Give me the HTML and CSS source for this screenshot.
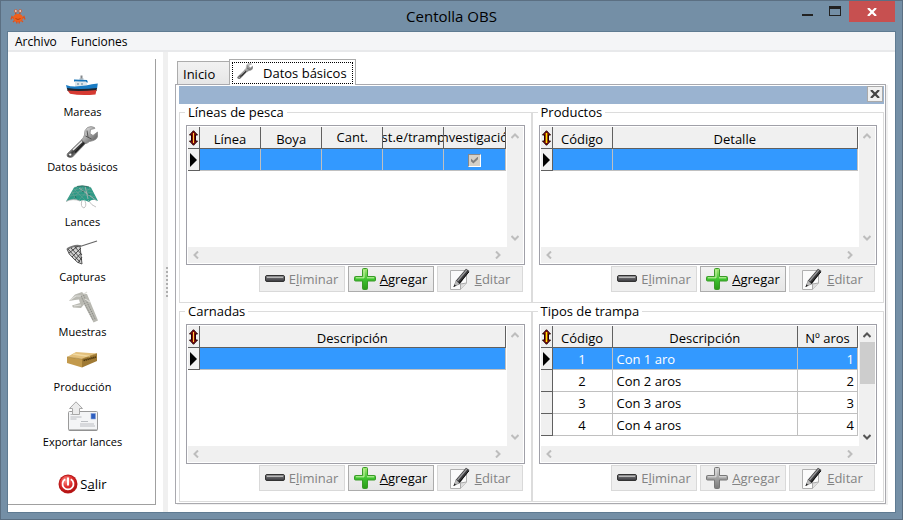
FILE: index.html
```html
<!DOCTYPE html>
<html lang="es">
<head>
<meta charset="utf-8">
<title>Centolla OBS</title>
<link rel="stylesheet" href="styles.css">
</head>
<body>
<svg class="defs" aria-hidden="true">
  <defs>
    <linearGradient id="steel" x1="0" y1="0" x2="1" y2="1"><stop offset="0" stop-color="#f4f4f4"/><stop offset=".5" stop-color="#a2a2a2"/><stop offset="1" stop-color="#4a4a4a"/></linearGradient>
    <linearGradient id="handle" x1="0" y1="0" x2="1" y2="1"><stop offset="0.3" stop-color="#d8d8d8"/><stop offset=".5" stop-color="#3c3c3c"/><stop offset=".75" stop-color="#a0a0a0"/></linearGradient>
    <linearGradient id="green" x1="0" y1="0" x2="0" y2="1"><stop offset="0" stop-color="#a8e878"/><stop offset=".5" stop-color="#3fc431"/><stop offset="1" stop-color="#2c9a18"/></linearGradient>
    <linearGradient id="grey" x1="0" y1="0" x2="0" y2="1"><stop offset="0" stop-color="#d8d8d8"/><stop offset=".5" stop-color="#a2a2a2"/><stop offset="1" stop-color="#7a7a7a"/></linearGradient>
    <linearGradient id="dark" x1="0" y1="0" x2="0" y2="1"><stop offset="0" stop-color="#a8a8a8"/><stop offset=".4" stop-color="#66666a"/><stop offset="1" stop-color="#38383c"/></linearGradient>
    <radialGradient id="red" cx=".4" cy=".3" r=".7"><stop offset="0" stop-color="#ff9a90"/><stop offset=".5" stop-color="#e03030"/><stop offset="1" stop-color="#b01010"/></radialGradient>
  </defs>
  <symbol id="wrench" viewBox="0 0 32 32">
    <path d="M1.500 27.500 L16 13.500 L20 17 L6.500 31 Q3.500 32 1.500 30.500 Q.5 29 1.500 27.500z" fill="url(#handle)" stroke="#666" stroke-width=".7"/>
    <path d="M7 24 L16 15.500" stroke="#eee" stroke-width="1.300"/>
    <path d="M9 26.500 L18 17" stroke="#222" stroke-width="1.500"/>
    <circle cx="4.200" cy="28.600" r="1.500" fill="#fff" stroke="#555" stroke-width=".8"/>
    <path d="M15.500 14 Q17.500 12 18.500 9 Q18 4 21.500 1.500 Q25 -.3 28.500 1.500 L28.800 2.500 L24.500 3.500 L24 7.500 L27 9.500 L31.500 6 L31.800 9.500 Q31.500 13 27.500 14.500 Q23 15 20.500 17.500z" fill="url(#steel)" stroke="#8a8a8a" stroke-width=".8"/>
    <path d="M19.500 10 L25.500 13 M21 4.500 L22 11" stroke="#555" stroke-width="1"/>
  </symbol>
  <symbol id="ship" viewBox="0 0 32 32">
    <path d="M13.500 7 h4 v3 h-4z" fill="#c2ccd2"/><path d="M14.500 4.500h2v3h-2z" fill="#85898c"/>
    <path d="M8 8.500 L21 9 L22 11.500 L8 10.500z" fill="#1874b8"/>
    <path d="M9 10.500 H20 L22 16 H9z" fill="#dfe6ea"/><path d="M11 12h2v2h-2z M15 12h2v2h-2z" fill="#9db4c2"/>
    <path d="M0 14 Q4 15.500 9 15.500 L20 14.500 Q26 13 31.800 12.500 L31 18 H1z" fill="#1a7cc4"/>
    <path d="M1 17 Q14 19 31 17 L30.500 20 H1.500z" fill="#20242c"/>
    <path d="M1.500 19.500 Q15 20.500 30.500 19 L29.500 23.500 Q15 25 4 22.800z" fill="#d63a32"/>
  </symbol>
  <symbol id="trap" viewBox="0 0 32 32">
    <path d="M8 6.500 Q16 3 25 6.500 L32 20 Q26 17 23 21 Q18 18 14 20 Q7 17 0 20.500z" fill="#2d9a86"/>
    <path d="M8 6.500 Q16 3 25 6.500 M7 9 Q16 6 26 9 M5 12 Q16 9 28 12 M4 15 Q16 12 30 16 M1 19 L12 6 M6 19 L18 5 M13 19 L24 7 M27 17 L14 6 M19 19 L8 8 M10 19 L6 10" fill="none" stroke="#84a49a" stroke-width=".4"/>
    <path d="M0 20.500 Q7 17 14 20 M19 5 L22 18 M13 7 L31 20 M16 19 Q14 26 18 27 Q21 25 19 20 M22 19 Q26 25 30 26" fill="none" stroke="#b4b4b4" stroke-width=".8"/>
    <path d="M11 5.500 Q16 4 23 6 M9 15 L10 17 M16 10l2 1 M22 13 l2 1" stroke="#1a5a50" stroke-width=".7" fill="none"/>
  </symbol>
  <symbol id="net" viewBox="0 0 32 32">
    <path d="M14 10.500 L31 5" stroke="#666" stroke-width="1.200"/>
    <path d="M1 13 Q7 9.500 14 10.500 L16 28 Q11 27 8 23 Q2 18 1 13z" fill="#999" fill-opacity=".45" stroke="#555"/>
    <path d="M2 13 L14 26 M5 12 L16 24 M9 11 L16 19 M3 17 L12 10 M6 21 L15 12 M9 24 L15 17 M12 27 L16 21" stroke="#3c3c3c" stroke-width=".9"/>
    <path d="M1 13 Q9 8 15 10" stroke="#777" fill="none" stroke-width="1.500"/>
  </symbol>
  <symbol id="caliper" viewBox="0 0 32 32">
    <path d="M2 10 L8 3.500 L15 1 L17 3 L20 3 L31 29.500 L26.500 31.500 L17 13.500 L14 17 L6 16.500 L5 14.500 L13 12 L12 8.500 L8 9z" fill="#b9b9b2"/>
    <path d="M14 5 L26 29 M16.500 4 L28.500 29" stroke="#8a8a86" stroke-width="1" stroke-dasharray="1.500 1"/>
    <path d="M3 9 L9 5 L14 5 M7 15 L14 14 M17 3 L20 1 M18 8 L23 11" stroke="#dededa" stroke-width="1.200" fill="none"/>
  </symbol>
  <symbol id="box" viewBox="0 0 32 32">
    <path d="M1 11 L10 6 L31 7.500 L18 13z" fill="#e3c07c"/>
    <path d="M1 11 L16 13 L16 21.500 L1 17z" fill="#c39a4c"/><path d="M16 13 L31 7.500 L31 15 L16 21.500z" fill="#a07a34"/>
    <path d="M7 8 L24 10.500" stroke="#f0d8a0" stroke-width="1.500"/>
    <path d="M17.500 14.500 L30 11" stroke="#4e3810" stroke-width="1.800" stroke-dasharray="1.500 .5"/>
    <path d="M1 11 L16 13 L31 7.500" stroke="#a07c34" fill="none" stroke-width=".6"/>
  </symbol>
  <symbol id="letter" viewBox="0 0 32 32">
    <rect x="1.500" y="10.500" width="29" height="19" rx="1" fill="#f4f5f6" stroke="#9a9a9a"/>
    <path d="M2 29 H30" stroke="#888"/>
    <path d="M3.500 13.500h8 M3.500 16h11 M3.500 18h6 M14 20.500h7 M13 23h14 M13 25h15" stroke="#b4b8bc" stroke-width=".9"/>
    <rect x="24" y="12.500" width="4.500" height="5.500" fill="#2e5fc0" stroke="#8aa4d8" stroke-width=".6"/>
    <path d="M9 .8 L15.500 7.500 H12.500 V13.500 H5.500 V7.500 H2.500z" fill="#ececec" stroke="#a8a8a8"/>
  </symbol>
  <symbol id="power" viewBox="0 0 20 20">
    <circle cx="10" cy="10" r="9.500" fill="#b81818"/><circle cx="10" cy="10" r="8.500" fill="url(#red)"/>
    <path d="M7.200 5.200 A5.500 5.500 0 1 0 12.800 5.200" fill="none" stroke="#fff" stroke-width="1.800"/><path d="M10 3.500 V11.500" stroke="#fff" stroke-width="2"/>
  </symbol>
  <symbol id="crab" viewBox="0 0 16 16">
    <path d="M6 6 L5.500 2 M9.500 6 L10.500 2" stroke="#b04020"/><circle cx="5.800" cy="2" r="1.500" fill="#dfc8c0" stroke="#c85028" stroke-width=".7"/><circle cx="10.200" cy="2" r="1.500" fill="#dfc8c0" stroke="#c85028" stroke-width=".7"/>
    <ellipse cx="8" cy="9" rx="5" ry="4.200" fill="#f0601c"/>
    <path d="M3.500 9.500 L2 7.500 L1 10.500 M12.500 9.500 L14 7.500 L15 10.500 M4.500 11.500 L3 13 M11.500 11.500 L13 13 M6.500 12.500 L7 14.500 M9.500 12.500 L9 14.500" stroke="#e0501c" stroke-width="1.200" fill="none"/>
    <path d="M5.500 9.500 Q8 11.500 10.500 9.500" stroke="#a83808" stroke-width=".8" fill="none"/>
  </symbol>
  <symbol id="minus" viewBox="0 0 20 8">
    <rect x=".5" y=".5" width="19" height="6" rx="1.500" fill="url(#dark)" stroke="#333"/><path d="M2 2.500h16" stroke="#b8b8b8"/>
  </symbol>
  <symbol id="plus" viewBox="0 0 22 22">
    <path d="M9.500 .5h3q1 0 1 1V8.500h7q1 0 1 1v2.500q0 1-1 1H13.500V20.500q0 1-1 1H9.500q-1 0-1-1V13H1.500q-1 0-1-1V9.500q0-1 1-1H8.500V1.500q0-1 1-1z" fill="url(#green)" stroke="#3a9a28"/>
    <path d="M10 2v7.800H2 M13 9.800h7" stroke="#c8f4a8" fill="none"/>
  </symbol>
  <symbol id="plus-off" viewBox="0 0 22 22">
    <path d="M9.500 .5h3q1 0 1 1V8.500h7q1 0 1 1v2.500q0 1-1 1H13.500V20.500q0 1-1 1H9.500q-1 0-1-1V13H1.500q-1 0-1-1V9.500q0-1 1-1H8.500V1.500q0-1 1-1z" fill="url(#grey)" stroke="#777"/>
    <path d="M10 2v7.800H2 M13 9.800h7" stroke="#dedede" fill="none"/>
  </symbol>
  <symbol id="pencil" viewBox="0 0 22 22">
    <path d="M1.500 2.500h16v12.500l-6 6.500h-10z" fill="#fbfbfb" stroke="#b0b0b0"/><path d="M11.500 21.500v-5.500l6-1" fill="#ddd" stroke="#aaa"/>
    <path d="M4.500 19 L7 12.500 L17 .8 L20.500 3 L11 16z" fill="#3a3a3c"/><path d="M8.500 13 L17.800 2" stroke="#9a9a9c" stroke-width="1.300"/><path d="M10 15.500 L19.800 4" stroke="#0c0c0c" stroke-width="1"/>
    <path d="M4.500 19 L7 12.500 L10.500 16z" fill="#b8b8b8"/><path d="M4.500 19 L5.500 16.500 L7 17.800z" fill="#111"/>
  </symbol>
  <symbol id="updown" viewBox="0 0 9 16">
    <path d="M4.500 .7 L8.500 5 H6.500 V11 H8.500 L4.500 15.300 L.5 11 H2.500 V5 H.5z" fill="#800808" stroke="#200000"/><path d="M4.500 3v10" stroke="#ffd040" stroke-width="1"/>
  </symbol>
  <symbol id="updown-gold" viewBox="0 0 9 16">
    <path d="M4.500 .7 L8.500 5 H6.500 V11 H8.500 L4.500 15.300 L.5 11 H2.500 V5 H.5z" fill="#800808" stroke="#200000"/><path d="M4.500 3v10" stroke="#ffe800" stroke-width="1.500"/>
  </symbol>
  <symbol id="here" viewBox="0 0 7 14"><path d="M0 0 L7 7 L0 14z" fill="#000"/></symbol>
  <symbol id="chev" viewBox="0 0 8 6"><path d="M.5 5 L4 1.500 L7.500 5" fill="none" stroke="currentColor" stroke-width="2"/></symbol>
  <symbol id="cross" viewBox="0 0 10 8"><path d="M1 0 L9 8 M9 0 L1 8" stroke="currentColor" stroke-width="2.200"/></symbol>
</svg>

<div class="window">
  <header class="titlebar">
    <svg class="app-icon"><use href="#crab"/></svg>
    <h1>Centolla OBS</h1>
    <div class="controls">
      <button class="min" aria-label="Minimizar"><i></i></button>
      <button class="max" aria-label="Maximizar"><i></i></button>
      <button class="close" aria-label="Cerrar"><svg><use href="#cross"/></svg></button>
    </div>
  </header>
  <div class="client">
    <nav class="menubar"><button>Archivo</button><button>Funciones</button></nav>
    <div class="body">
      <aside class="sidebar">
        <button class="nav"><svg><use href="#ship"/></svg>Mareas</button>
        <button class="nav"><svg><use href="#wrench"/></svg>Datos básicos</button>
        <button class="nav"><svg><use href="#trap"/></svg>Lances</button>
        <button class="nav"><svg><use href="#net"/></svg>Capturas</button>
        <button class="nav"><svg><use href="#caliper"/></svg>Muestras</button>
        <button class="nav"><svg><use href="#box"/></svg>Producción</button>
        <button class="nav"><svg><use href="#letter"/></svg>Exportar lances</button>
        <button class="exit"><svg><use href="#power"/></svg><span>S<u>a</u>lir</span></button>
      </aside>
      <div class="splitter"><i></i></div>
      <main class="main">
        <div class="tabs">
          <button class="tab">Inicio</button>
          <button class="tab active"><span class="focus"><svg><use href="#wrench"/></svg>Datos básicos</span></button>
        </div>
        <section class="page">
          <div class="bar"><button aria-label="Cerrar pestaña"><svg><use href="#cross"/></svg></button></div>
          <div class="panels">
            <fieldset>
              <legend>Líneas de pesca</legend>
              <div class="grid">
                <table>
                  <colgroup><col class="mark"><col><col><col><col><col></colgroup>
                  <thead><tr><th><svg><use href="#updown"/></svg></th><th>Línea</th><th>Boya</th><th class="raised">Cant.</th><th class="raised"><span class="clip">st.e/tramp</span></th><th class="raised"><span class="clip">nvestigació</span></th></tr></thead>
                  <tbody><tr class="sel"><th><svg><use href="#here"/></svg></th><td></td><td></td><td></td><td></td><td class="center"><input type="checkbox" checked disabled aria-label="Investigación"></td></tr></tbody>
                </table>
                <div class="vscroll"><svg><use href="#chev"/></svg><svg class="down"><use href="#chev"/></svg></div>
                <div class="hscroll"><svg class="left"><use href="#chev"/></svg><svg class="right"><use href="#chev"/></svg></div>
              </div>
              <div class="actions">
                <button disabled><svg class="flat"><use href="#minus"/></svg><span>E<u>l</u>iminar</span></button>
                <button><svg><use href="#plus"/></svg><span><u>A</u>gregar</span></button>
                <button disabled><svg><use href="#pencil"/></svg><span><u>E</u>ditar</span></button>
              </div>
            </fieldset>
            <fieldset>
              <legend>Productos</legend>
              <div class="grid">
                <table>
                  <colgroup><col class="mark"><col class="code"><col></colgroup>
                  <thead><tr><th><svg><use href="#updown-gold"/></svg></th><th>Código</th><th>Detalle</th></tr></thead>
                  <tbody><tr class="sel"><th><svg><use href="#here"/></svg></th><td></td><td></td></tr></tbody>
                </table>
                <div class="vscroll"><svg><use href="#chev"/></svg><svg class="down"><use href="#chev"/></svg></div>
                <div class="hscroll"><svg class="left"><use href="#chev"/></svg><svg class="right"><use href="#chev"/></svg></div>
              </div>
              <div class="actions">
                <button disabled><svg class="flat"><use href="#minus"/></svg><span>E<u>l</u>iminar</span></button>
                <button><svg><use href="#plus"/></svg><span><u>A</u>gregar</span></button>
                <button disabled><svg><use href="#pencil"/></svg><span><u>E</u>ditar</span></button>
              </div>
            </fieldset>
            <fieldset>
              <legend>Carnadas</legend>
              <div class="grid">
                <table>
                  <colgroup><col class="mark"><col></colgroup>
                  <thead><tr><th><svg><use href="#updown"/></svg></th><th>Descripción</th></tr></thead>
                  <tbody><tr class="sel"><th><svg><use href="#here"/></svg></th><td></td></tr></tbody>
                </table>
                <div class="vscroll"><svg><use href="#chev"/></svg><svg class="down"><use href="#chev"/></svg></div>
                <div class="hscroll"><svg class="left"><use href="#chev"/></svg><svg class="right"><use href="#chev"/></svg></div>
              </div>
              <div class="actions">
                <button disabled><svg class="flat"><use href="#minus"/></svg><span>E<u>l</u>iminar</span></button>
                <button><svg><use href="#plus"/></svg><span><u>A</u>gregar</span></button>
                <button disabled><svg><use href="#pencil"/></svg><span><u>E</u>ditar</span></button>
              </div>
            </fieldset>
            <fieldset>
              <legend>Tipos de trampa</legend>
              <div class="grid">
                <table>
                  <colgroup><col class="mark"><col class="code"><col><col class="code"></colgroup>
                  <thead><tr><th><svg><use href="#updown-gold"/></svg></th><th>Código</th><th>Descripción</th><th>Nº aros</th></tr></thead>
                  <tbody>
                    <tr class="sel"><th><svg><use href="#here"/></svg></th><td class="center">1</td><td>Con 1 aro</td><td class="num">1</td></tr>
                    <tr><th></th><td class="center">2</td><td>Con 2 aros</td><td class="num">2</td></tr>
                    <tr><th></th><td class="center">3</td><td>Con 3 aros</td><td class="num">3</td></tr>
                    <tr><th></th><td class="center">4</td><td>Con 4 aros</td><td class="num">4</td></tr>
                  </tbody>
                </table>
                <div class="vscroll live"><svg><use href="#chev"/></svg><i class="thumb"></i><svg class="down"><use href="#chev"/></svg></div>
                <div class="hscroll"><svg class="left"><use href="#chev"/></svg><svg class="right"><use href="#chev"/></svg></div>
              </div>
              <div class="actions">
                <button disabled><svg class="flat"><use href="#minus"/></svg><span>E<u>l</u>iminar</span></button>
                <button disabled><svg><use href="#plus-off"/></svg><span><u>A</u>gregar</span></button>
                <button disabled><svg><use href="#pencil"/></svg><span><u>E</u>ditar</span></button>
              </div>
            </fieldset>
          </div>
        </section>
      </main>
    </div>
  </div>
</div>
</body>
</html>
```
FILE: styles.css
```css
* { box-sizing: border-box; }
body { margin: 0; font: 13px/17px "Open Sans", "Noto Sans", sans-serif; color: #000; }
button { font: inherit; color: inherit; margin: 0; padding: 0; border: 0; background: none; white-space: nowrap; }
svg { display: block; flex: none; }
.defs { position: absolute; width: 0; height: 0; }

.window { height: 100vh; display: flex; flex-direction: column; padding: 0 7px 7px; background: #748fa6; border: 1px solid #5b6f82; }
.titlebar { height: 31px; flex: none; display: grid; grid-template-columns: 1fr auto 1fr; align-items: start; }
.app-icon { width: 16px; height: 16px; margin: 8px 0 0 2px; }
h1 { margin: 5px 0 0; font-size: 15px; line-height: 20px; font-weight: 400; }
.controls { display: flex; justify-content: flex-end; color: #222; }
.controls button { height: 21px; width: 28px; display: flex; justify-content: center; }
.min i { width: 11px; height: 2px; margin-top: 13px; background: #222; }
.max i { width: 12px; height: 10px; margin-top: 5px; border: 1px solid #222; border-top-width: 3px; }
.controls .close { width: 46px; background: #c75050; color: #fff; align-items: center; }
.close svg { width: 10px; height: 8px; }

.client { flex: 1; min-height: 0; display: flex; flex-direction: column; background: #fff; outline: 1px solid #5f7b92; }
.menubar { height: 20px; flex: none; display: flex; align-items: flex-end; gap: 14px; padding-left: 7px; background: #f4f5f7; border-bottom: 2px solid #e8e9eb; font-size: 12px; }
.body { flex: 1; min-height: 0; display: flex; }

.sidebar { width: 148px; flex: none; margin: 7px 7px 7px 0; padding: 12px 0 0 2px; border: solid #a0a0a0; border-width: 0 1px 1px 0; display: flex; flex-direction: column; align-items: center; gap: 6px; }
.nav { display: flex; flex-direction: column; align-items: center; font-size: 11px; }
.nav svg { width: 32px; height: 32px; }
.exit { display: flex; align-items: center; gap: 2px; margin-top: 18px; }
.exit svg { width: 20px; height: 20px; }
.splitter { width: 5px; flex: none; background: #f0f0f0; display: flex; align-items: center; justify-content: flex-end; }
.splitter i { width: 2px; height: 30px; background: repeating-linear-gradient(#b0b0b0 0 2px, #f0f0f0 2px 4px); }

.main { flex: 1; min-width: 0; display: flex; flex-direction: column; padding: 7px 9px 8px 7px; }
.tabs { display: flex; align-items: flex-end; padding-left: 2px; }
.tab { height: 23px; width: 52px; padding: 2px 9px 0 5px; text-align: left; border: 1px solid #acacac; border-width: 1px 0 0 1px; background: linear-gradient(#f2f2f2, #e6e6e6); }
.tab.active { position: relative; width: auto; height: 26px; margin-bottom: -1px; padding: 2px; border-width: 1px 1px 0; background: #fff; }
.focus { display: flex; gap: 10px; height: 22px; padding: 0 5px 0 4px; align-items: center; border: 1px dotted #000; }
.focus svg { width: 16px; height: 16px; align-self: flex-start; }
.page { flex: 1; min-height: 0; display: flex; flex-direction: column; padding: 1px 1px 2px 3px; border: 1px solid #a9a9ae; box-shadow: 2px 1px #f0f0f0; }
.bar { height: 18px; flex: none; display: flex; justify-content: flex-end; padding-right: 1px; background: #9ab3d0; }
.bar button { width: 16px; height: 16px; display: flex; align-items: center; justify-content: center; border: 1px solid #aaa; background: #f0f0f0; color: #444; }
.bar svg { width: 10px; height: 8px; }

.panels { flex: 1; min-height: 0; display: grid; grid-template-columns: 1fr 1fr; grid-template-rows: 199px 1fr; }
fieldset { min-width: 0; margin: 0; padding: 4px 6px 10px; border: 1px solid #dcdcdc; }
legend { margin-left: -1px; padding: 0 3px; }
.grid { height: 140px; display: grid; grid-template-columns: 1fr 16px; grid-template-rows: 1fr 16px; padding: 1px; border: 1px solid #a0a0a8; background: #fff; }
table { width: calc(100% - 1px); table-layout: fixed; border-spacing: 0; align-self: start; }
.mark { width: 12px; }
.code { width: 60px; }
tr { height: 22px; }
th, td { height: 22px; padding: 1px 4px 0; font-weight: 400; line-height: 17px; overflow: hidden; white-space: nowrap; }
th { padding: 3px 0 0; text-align: center; background: #f0f0f0; border: solid #606060; border-width: 0 1px 1px 0; }
th:first-child { padding: 0; }
th.raised { padding: 0; vertical-align: top; line-height: 20px; }
th svg { width: 9px; height: 16px; margin: 0 auto; }
tbody th svg { width: 7px; height: 14px; }
.clip { display: flex; justify-content: center; }
td { border: solid #c0c0c0; border-width: 0 1px 1px 0; }
td.center { text-align: center; }
td.num { text-align: right; padding-right: 3px; }
.sel td { background: #3399ff; color: #fff; }
input[type="checkbox"] { appearance: none; display: block; width: 13px; height: 13px; margin: 0 auto; border: 1px solid; border-color: #888 #fff #fff #888; background: #d4d0c8; }
input[type="checkbox"]::before { content: ""; display: block; width: 7px; height: 7px; margin: 2px; background: #808080; clip-path: polygon(0 28%, 35% 62%, 100% 0, 100% 38%, 35% 100%, 0 68%); }

.vscroll, .hscroll { display: flex; justify-content: space-between; align-items: center; background: #f0f0f0; color: #bdbdbd; }
.vscroll { flex-direction: column; padding: 6px 0; }
.hscroll { grid-column: 1 / -1; padding: 0 21px 0 4px; }
.vscroll svg, .hscroll svg { width: 8px; height: 6px; }
.down { transform: rotate(180deg); }
.left { transform: rotate(-90deg); }
.right { transform: rotate(90deg); }
.live { color: #555; }
.thumb { width: 15px; height: 42px; margin: 4px 0 auto; background: #cdcdcd; }

.actions { display: flex; justify-content: flex-end; gap: 3px; padding: 1px 2px 0 0; }
.actions button { width: 86px; height: 26px; display: flex; align-items: center; justify-content: center; gap: 4px; border: 1px solid #acacac; background: linear-gradient(#f2f2f2, #e6e6e6); }
.actions button:disabled { color: #838383; border-color: #d9d9d9; background: #efefef; }
.actions svg { width: 22px; height: 22px; }
.actions .flat { width: 20px; height: 8px; }
```
